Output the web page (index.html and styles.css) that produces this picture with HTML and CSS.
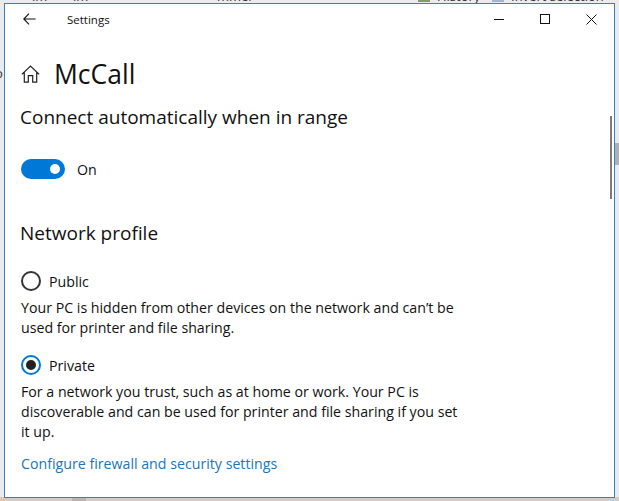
FILE: index.html
```html
<!DOCTYPE html>
<html lang="en">
<head>
  <meta charset="UTF-8" />
  <title>Settings</title>
  <link rel="stylesheet" href="styles.css">
</head>
<body>
  <!-- bits of the explorer window behind -->
  <div class="behind">
    <span class="behind-text b1">lm</span>
    <span class="behind-text b2">lm</span>
    <span class="behind-text b3">mmer</span>
    <span class="behind-text b4">History</span>
    <span class="behind-icon i1"></span>
    <span class="behind-icon i2"></span>
    <span class="behind-text b5">Invert selection</span>
    <span class="behind-text b6">o</span>
    <span class="side-thumb"></span>
    <span class="bottom-thumb"></span>
  </div>

  <div class="window">
    <header class="titlebar">
      <svg class="back" width="13" height="12" viewBox="0 0 13 12">
        <path d="M6 0.6 L0.8 6 L6 11.4 M0.8 6 H12.6" fill="none" stroke="#111" stroke-width="1.1"/>
      </svg>
      <span class="app-name">Settings</span>
      <div class="controls">
        <svg width="10" height="10" viewBox="0 0 10 10"><path d="M0 5.5 H10" stroke="#111" fill="none"/></svg>
        <svg width="10" height="10" viewBox="0 0 10 10"><rect x="0.5" y="0.5" width="9" height="9" stroke="#111" fill="none"/></svg>
        <svg width="11" height="11" viewBox="0 0 11 11"><path d="M0.5 0.5 L10.5 10.5 M10.5 0.5 L0.5 10.5" stroke="#111" fill="none"/></svg>
      </div>
    </header>

    <main class="content">
      <div class="page-head">
        <svg class="home" width="19" height="18" viewBox="0 0 19 18">
          <path d="M0.8 9.4 L9.5 1 L18.2 9.4 M3.3 7.4 V17.2 H7.3 V10.6 H11.7 V17.2 H15.7 V7.4" fill="none" stroke="#222" stroke-width="1.2"/>
        </svg>
        <h1>McCall</h1>
      </div>

      <h2 class="first">Connect automatically when in range</h2>
      <div class="toggle-row">
        <span class="toggle"><span class="knob"></span></span>
        <span>On</span>
      </div>

      <h2 class="second">Network profile</h2>

      <div class="radio-row">
        <span class="radio"></span>
        <span>Public</span>
      </div>
      <p>Your PC is hidden from other devices on the network and can&rsquo;t be used for printer and file sharing.</p>

      <div class="radio-row lower">
        <span class="radio checked"></span>
        <span>Private</span>
      </div>
      <p>For a network you trust, such as at home or work. Your PC is discoverable and can be used for printer and file sharing if you set it up.</p>

      <a class="link" href="#">Configure firewall and security settings</a>
    </main>

    <div class="scrollbar"></div>
  </div>
</body>
</html>
```

FILE: styles.css
```css
* {
  margin: 0;
  padding: 0;
  box-sizing: border-box;
  font-family: 'Open Sans', 'Noto Sans', sans-serif;
}

body {
  width: 619px;
  height: 501px;
  overflow: hidden;
  position: relative;
  background: linear-gradient(to bottom, #e9ebee 0, #e9ebee 497px, #cfccca 497px);
  color: #111;
}

.behind {
  height: 3px;
}

.behind-text {
  position: absolute;
  top: -13px;
  font-size: 13px;
  color: #333;
}

.b1 { left: 32px; }
.b2 { left: 73px; }
.b3 { left: 217px; }
.b4 { left: 437px; }
.b5 { left: 511px; }
.b6 { left: -5px; top: 64px; }

.behind-icon {
  position: absolute;
  top: 0;
  width: 12px;
  height: 2px;
}

.i1 { left: 418px; background-color: #7fa05f; }
.i2 { left: 492px; background-color: #9db7d8; }

.side-thumb {
  position: absolute;
  right: 0;
  top: 143px;
  width: 4px;
  height: 22px;
  background-color: #adb1b6;
}

.bottom-thumb {
  position: absolute;
  left: 72px;
  bottom: 0;
  width: 14px;
  height: 4px;
  background-color: #b8b5b3;
}

.window {
  position: absolute;
  left: 4px;
  top: 3px;
  width: 611px;
  height: 495px;
  background-color: #fff;
  border: 1.5px solid #3c80b8;
  display: flex;
  flex-direction: column;
}

.titlebar {
  display: flex;
  align-items: center;
  height: 30px;
  flex-shrink: 0;
  padding-left: 18px;
}

.app-name {
  margin-left: 31px;
  font-size: 11.5px;
}

.controls {
  margin-left: auto;
  display: flex;
  align-items: center;
  gap: 36px;
  padding-right: 17px;
}

.content {
  padding-left: 15px;
  flex: 1;
}

.page-head {
  display: flex;
  align-items: center;
  margin-top: 20px;
  height: 40px;
}

.home {
  margin-left: 1px;
}

h1 {
  font-size: 26.5px;
  font-weight: 400;
  margin-left: 14px;
}

h2 {
  font-size: 19px;
  font-weight: 400;
}

.first {
  margin-top: 10px;
}

.second {
  margin-top: 41px;
}

.toggle-row {
  display: flex;
  align-items: center;
  gap: 12px;
  font-size: 14.2px;
  margin-top: 29px;
  margin-left: 1px;
}

.toggle {
  width: 44px;
  height: 20px;
  border-radius: 10px;
  background-color: #0078d7;
  display: flex;
  align-items: center;
  justify-content: flex-end;
  padding-right: 5px;
}

.knob {
  width: 10px;
  height: 10px;
  border-radius: 50%;
  background-color: #fff;
}

.radio-row {
  display: flex;
  align-items: center;
  gap: 8px;
  font-size: 14.2px;
  margin-top: 25px;
  margin-left: 1px;
}

.radio-row.lower {
  margin-top: 17px;
}

.radio {
  width: 20px;
  height: 20px;
  border-radius: 50%;
  border: 2px solid #333;
  display: flex;
  align-items: center;
  justify-content: center;
}

.radio.checked {
  border-color: #0078d7;
}

.radio.checked::after {
  content: "";
  width: 10px;
  height: 10px;
  border-radius: 50%;
  background-color: #222;
}

p {
  width: 442px;
  font-size: 14.2px;
  line-height: 20px;
  margin-top: 7px;
  margin-left: 1px;
}

.link {
  display: block;
  margin-top: 12px;
  margin-left: 1px;
  font-size: 14.2px;
  color: #1a75bb;
  text-decoration: none;
}

.scrollbar {
  position: absolute;
  right: 2px;
  top: 112px;
  width: 2px;
  height: 83px;
  background-color: #7d7a7a;
}
```
